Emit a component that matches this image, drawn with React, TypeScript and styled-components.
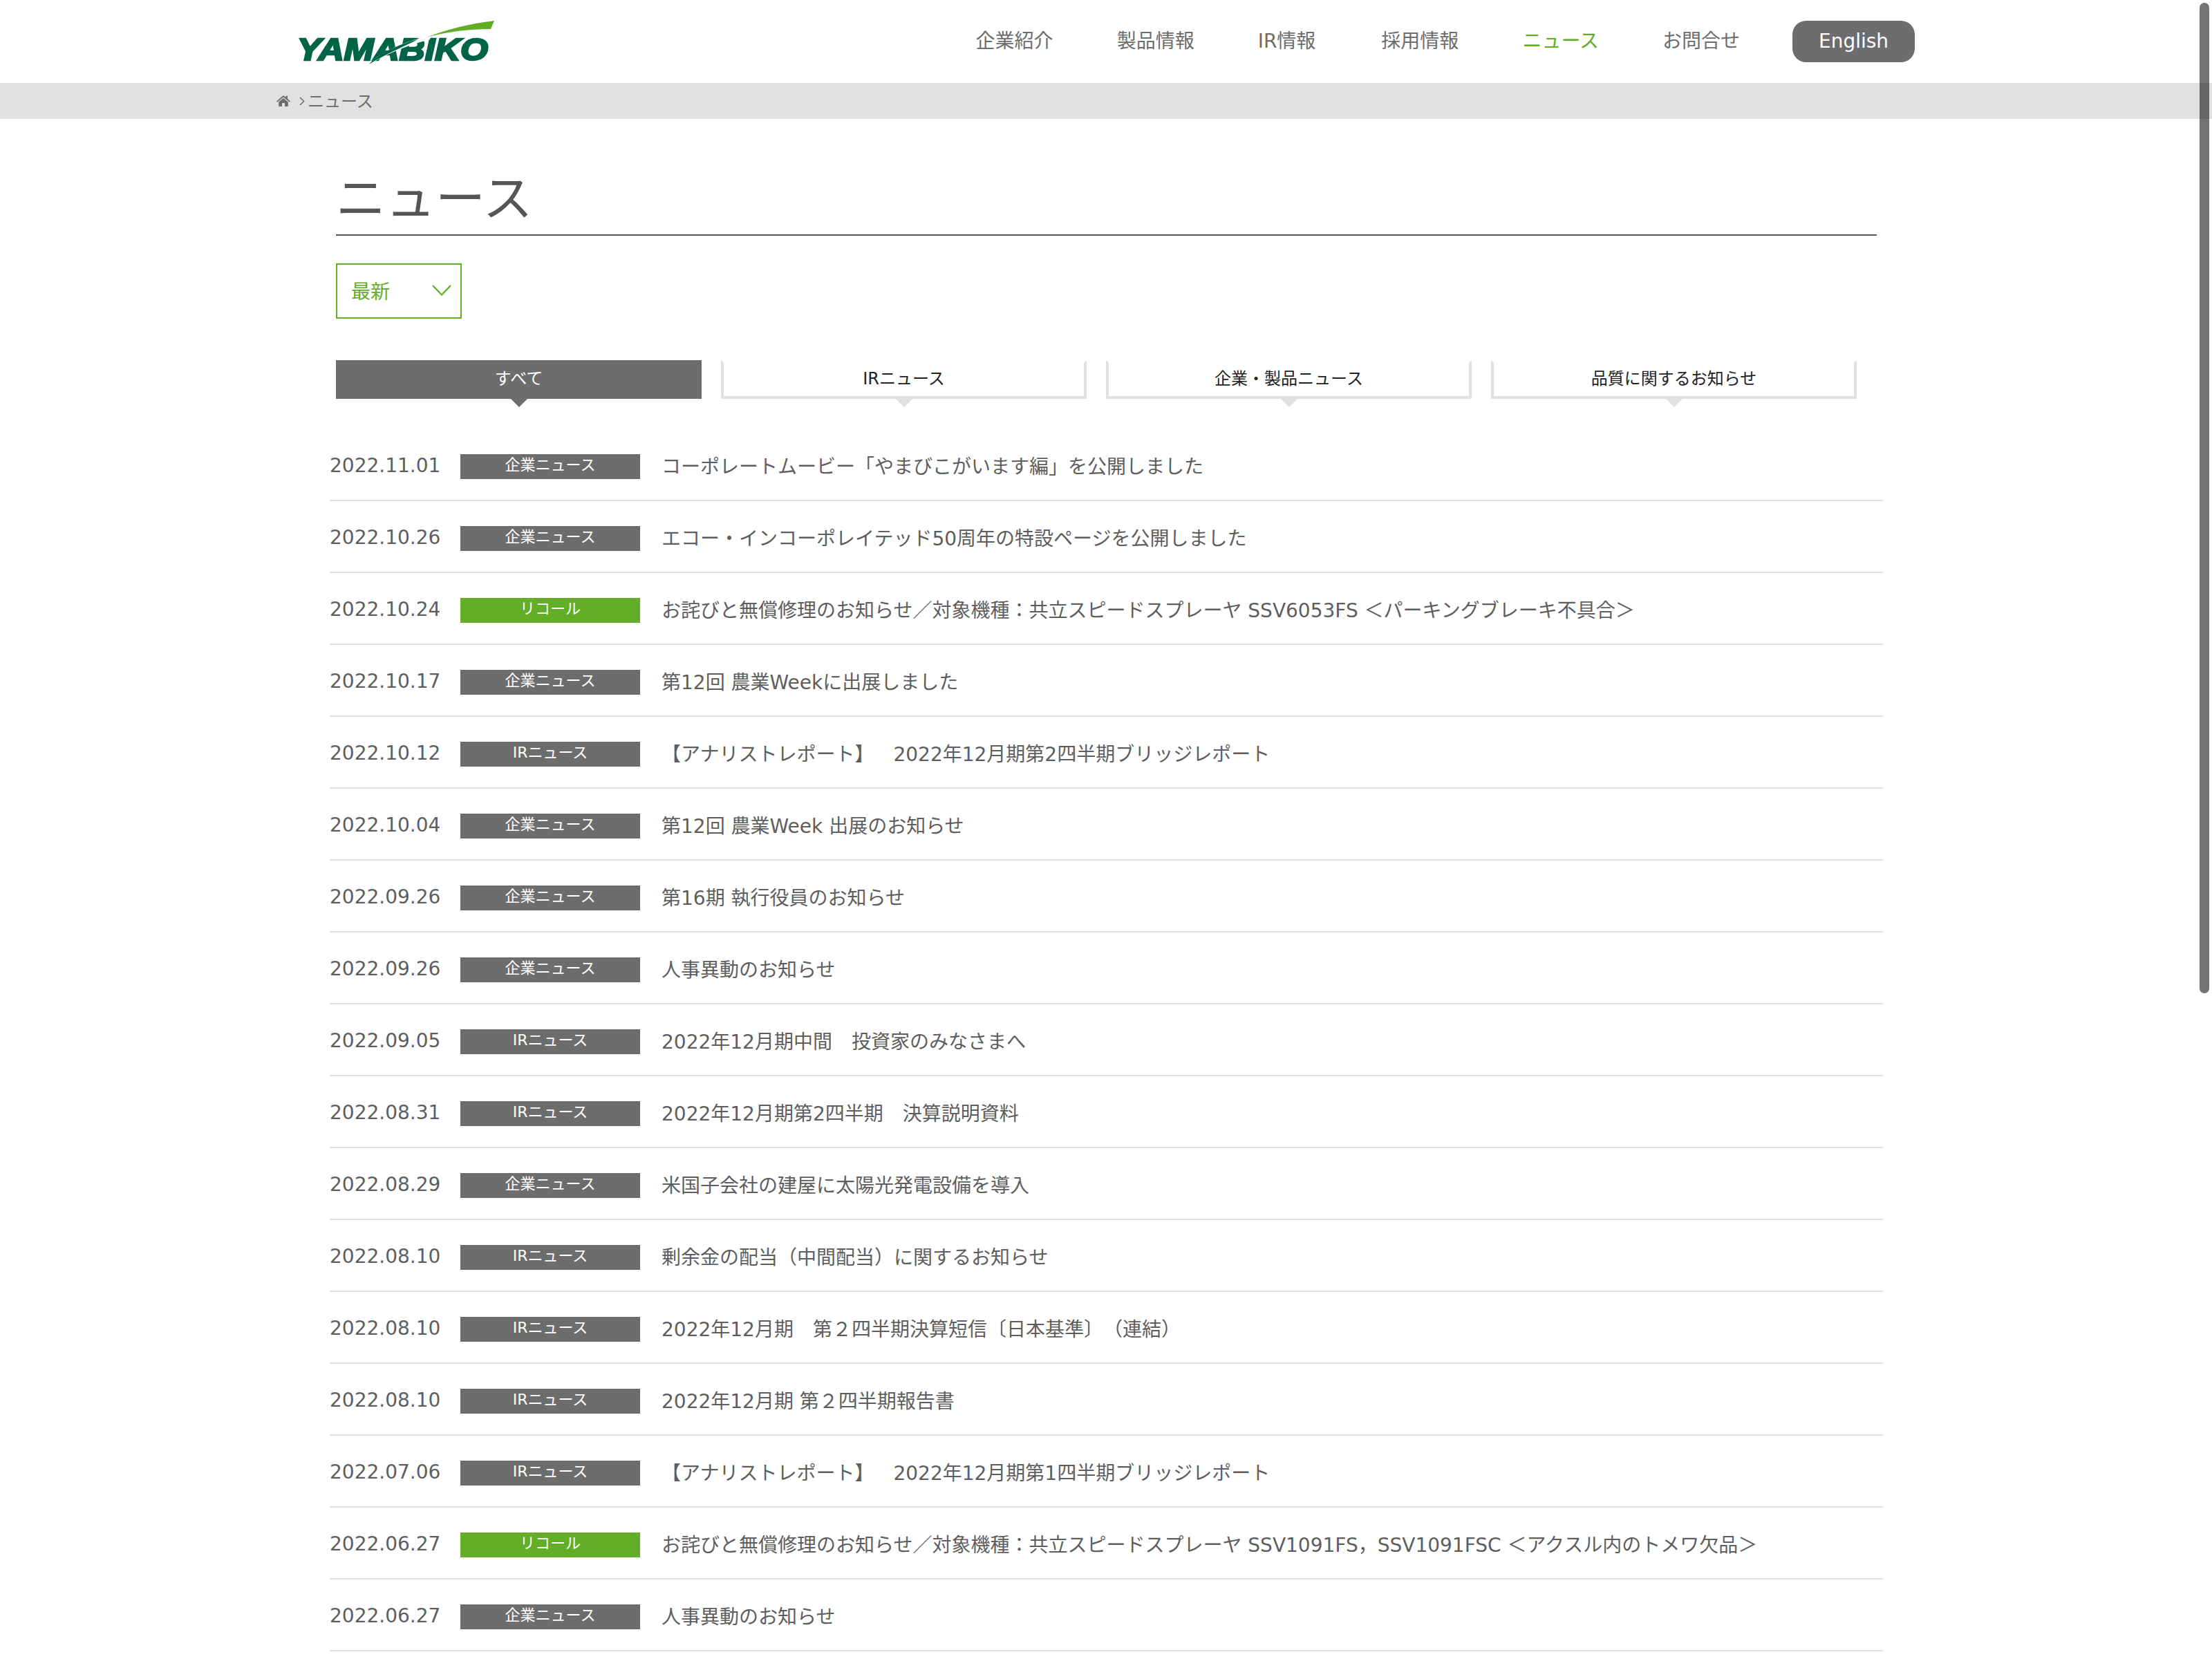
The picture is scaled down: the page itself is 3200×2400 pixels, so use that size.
import styled, { createGlobalStyle } from "styled-components";

const GREEN = "#62ae26";
const GRAY = "#6d6d6d";

type NewsItem = { date: string; kind: "corp" | "ir" | "recall"; title: string };

const NEWS: NewsItem[] = [
  { date: "2022.11.01", kind: "corp", title: "コーポレートムービー「やまびこがいます編」を公開しました" },
  { date: "2022.10.26", kind: "corp", title: "エコー・インコーポレイテッド50周年の特設ページを公開しました" },
  { date: "2022.10.24", kind: "recall", title: "お詫びと無償修理のお知らせ／対象機種：共立スピードスプレーヤ SSV6053FS ＜パーキングブレーキ不具合＞" },
  { date: "2022.10.17", kind: "corp", title: "第12回 農業Weekに出展しました" },
  { date: "2022.10.12", kind: "ir", title: "【アナリストレポート】　2022年12月期第2四半期ブリッジレポート" },
  { date: "2022.10.04", kind: "corp", title: "第12回 農業Week 出展のお知らせ" },
  { date: "2022.09.26", kind: "corp", title: "第16期 執行役員のお知らせ" },
  { date: "2022.09.26", kind: "corp", title: "人事異動のお知らせ" },
  { date: "2022.09.05", kind: "ir", title: "2022年12月期中間　投資家のみなさまへ" },
  { date: "2022.08.31", kind: "ir", title: "2022年12月期第2四半期　決算説明資料" },
  { date: "2022.08.29", kind: "corp", title: "米国子会社の建屋に太陽光発電設備を導入" },
  { date: "2022.08.10", kind: "ir", title: "剰余金の配当（中間配当）に関するお知らせ" },
  { date: "2022.08.10", kind: "ir", title: "2022年12月期　第２四半期決算短信〔日本基準〕（連結）" },
  { date: "2022.08.10", kind: "ir", title: "2022年12月期 第２四半期報告書" },
  { date: "2022.07.06", kind: "ir", title: "【アナリストレポート】　2022年12月期第1四半期ブリッジレポート" },
  { date: "2022.06.27", kind: "recall", title: "お詫びと無償修理のお知らせ／対象機種：共立スピードスプレーヤ SSV1091FS，SSV1091FSC ＜アクスル内のトメワ欠品＞" },
  { date: "2022.06.27", kind: "corp", title: "人事異動のお知らせ" },
];

const KIND_LABEL = { corp: "企業ニュース", ir: "IRニュース", recall: "リコール" };

const NAV = ["企業紹介", "製品情報", "IR情報", "採用情報", "ニュース", "お問合せ"];
const TABS = ["すべて", "IRニュース", "企業・製品ニュース", "品質に関するお知らせ"];

const Global = createGlobalStyle`
  html, body {
    margin: 0;
    padding: 0;
    background: #fff;
  }
  body {
    font-family: "DejaVu Sans", "Noto Sans CJK JP", sans-serif;
    font-weight: 400;
    color: #555;
    text-spacing-trim: space-all;
  }
`;

const App = () => {
  return (
    <Page>
      <Global />
      <Header>
        <LogoLink href="#">
          <Logo />
        </LogoLink>
        <Nav>
          {NAV.map((n) => (
            <NavItem key={n} $active={n === "ニュース"} href="#">
              {n}
            </NavItem>
          ))}
          <EnglishButton href="#">English</EnglishButton>
        </Nav>
      </Header>
      <Breadcrumb>
        <svg width="20" height="16" viewBox="0 0 20 16" fill={GRAY}>
          <path d="M10 0 L13.4 2.8 V0.8 H16 V5 L20 8.4 L18.8 9.8 L10 2.6 L1.2 9.8 L0 8.4 Z" />
          <path d="M3.2 9.6 L10 4 L16.8 9.6 V16 H12 V11 H8 V16 H3.2 Z" />
        </svg>
        <CrumbSep width="8" height="13" viewBox="0 0 8 13" fill="none" stroke={GRAY} strokeWidth="1.5">
          <path d="M1 1 L6.6 6.5 L1 12" />
        </CrumbSep>
        <CrumbText>ニュース</CrumbText>
      </Breadcrumb>
      <Main>
        <Title>ニュース</Title>
        <YearSelect>
          <span>最新</span>
          <svg width="28" height="16" viewBox="0 0 28 16" fill="none" stroke={GREEN} strokeWidth="2.2">
            <path d="M1 1 L14 14.5 L27 1" />
          </svg>
        </YearSelect>
        <Tabs>
          {TABS.map((t, i) => (
            <Tab key={t} $active={i === 0}>
              {t}
            </Tab>
          ))}
        </Tabs>
        <List>
          {NEWS.map((n, i) => (
            <Row key={i}>
              <DateText>{n.date}</DateText>
              <Badge $recall={n.kind === "recall"}>{KIND_LABEL[n.kind]}</Badge>
              <RowTitle>{n.title}</RowTitle>
            </Row>
          ))}
        </List>
      </Main>
      <ScrollThumb />
    </Page>
  );
};

export default App;

const Logo = () => (
  <svg width="290" height="72" viewBox="0 0 290 72">
    <text
      x="2"
      y="63"
      fontFamily="'Liberation Sans', sans-serif"
      fontWeight="700"
      fontStyle="italic"
      fontSize="45"
      textLength="276"
      lengthAdjust="spacingAndGlyphs"
      fill="#006446"
      stroke="#006446"
      strokeWidth="2.6"
    >
      YAMABIKO
    </text>
    <path d="M104 71 C122 50 155 38 196 26 L194 33 C160 42 130 54 104 71 Z" fill="#fff" />
    <path d="M106 69 C120 53 145 42 178 32 C158 43 130 54 106 69 Z" fill="#006446" />
    <path d="M189 30 C220 18 252 10 287 6 L282 18 C250 18 218 22 189 30 Z" fill={GREEN} />
  </svg>
);

const Page = styled.div`
  width: 3200px;
  height: 2400px;
  overflow: hidden;
  position: relative;
`;

const Header = styled.header`
  height: 120px;
  box-sizing: border-box;
  padding: 0 430px 0 428px;
  display: flex;
  align-items: center;
  justify-content: space-between;
`;

const LogoLink = styled.a`
  display: block;
  height: 72px;
`;

const Nav = styled.nav`
  display: flex;
  align-items: center;
`;

const NavItem = styled.a<{ $active?: boolean }>`
  font-size: 28px;
  line-height: 60px;
  color: ${(p) => (p.$active ? GREEN : GRAY)};
  text-decoration: none;
  margin-right: 92px;

  &:nth-child(3) {
    margin-right: 95px;
  }

  &:nth-child(6) {
    margin-right: 76px;
  }
`;

const EnglishButton = styled.a`
  width: 177px;
  height: 60px;
  border-radius: 20px;
  background: ${GRAY};
  color: #fff;
  font-size: 28px;
  line-height: 60px;
  text-align: center;
  text-decoration: none;
`;

const Breadcrumb = styled.div`
  height: 52px;
  background: #e1e1e1;
  box-sizing: border-box;
  padding-left: 400px;
  display: flex;
  align-items: center;
  font-size: 24px;
  color: ${GRAY};
`;

const CrumbSep = styled.svg`
  margin: 0 4px 0 13px;
`;

const CrumbText = styled.span`
  padding-bottom: 4px;
`;

const Main = styled.main`
  width: 2247px;
  margin-left: 477px;
`;

const Title = styled.h1`
  margin: 0 0 40px 9px;
  width: 2229px;
  height: 169px;
  box-sizing: border-box;
  border-bottom: 2px solid #555;
  padding-top: 65px;
  font-size: 72px;
  line-height: 100px;
  font-weight: 400;
  color: #555;
`;

const YearSelect = styled.div`
  margin-left: 9px;
  width: 182px;
  height: 80px;
  box-sizing: border-box;
  border: 2px solid ${GREEN};
  padding: 0 13px 3px 20px;
  display: flex;
  align-items: center;
  justify-content: space-between;
  font-size: 28px;
  color: ${GREEN};
`;

const Tabs = styled.div`
  margin: 60px 0 0 9px;
  display: flex;
  gap: 28px;
`;

const Tab = styled.div<{ $active?: boolean }>`
  position: relative;
  width: 529px;
  height: 56px;
  box-sizing: border-box;
  padding-bottom: 7px;
  background: ${(p) => (p.$active ? GRAY : "#fff")};
  border: 4px solid ${(p) => (p.$active ? GRAY : "#e1e1e1")};
  border-top-color: ${(p) => (p.$active ? GRAY : "#fff")};
  display: flex;
  align-items: center;
  justify-content: center;
  font-size: 24px;
  color: ${(p) => (p.$active ? "#fff" : "#222")};

  &::after {
    content: "";
    position: absolute;
    left: 50%;
    bottom: -16px;
    margin-left: -12px;
    border-style: solid;
    border-width: 12px 12px 0 12px;
    border-color: ${(p) => (p.$active ? GRAY : "#e1e1e1")} transparent transparent transparent;
  }
`;

const List = styled.ul`
  margin: 44px 0 0;
  padding: 0;
  list-style: none;
`;

const Row = styled.li`
  height: 104px;
  box-sizing: border-box;
  padding-top: 6px;
  border-bottom: 2px solid #e1e1e1;
  display: flex;
  align-items: center;
  font-size: 28px;
  color: #5e5e5e;
`;

const DateText = styled.span`
  width: 189px;
  padding-bottom: 3px;
`;

const Badge = styled.span<{ $recall?: boolean }>`
  width: 260px;
  height: 36px;
  margin-right: 31px;
  background: ${(p) => (p.$recall ? GREEN : GRAY)};
  color: #fff;
  font-size: 22px;
  line-height: 32px;
  text-align: center;
`;

const RowTitle = styled.span`
  padding-bottom: 4px;
`;

const ScrollThumb = styled.div`
  position: absolute;
  top: 4px;
  right: 4px;
  width: 14px;
  height: 1433px;
  border-radius: 7px;
  background: rgba(0, 0, 0, 0.55);
`;
